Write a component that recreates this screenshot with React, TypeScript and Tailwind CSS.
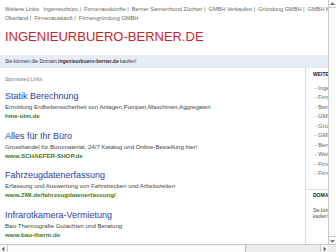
const ads = [
  {
    title: 'Statik Berechnung',
    desc: 'Ermittlung Erdbebensicherheit von Anlagen,Pumpen,Maschinen,Aggregaten',
    url: 'hme-ulm.de',
  },
  {
    title: 'Alles für Ihr Büro',
    desc: 'Grosshandel für Büromaterial, 24/7 Katalog und Online-Bestellung hier!',
    url: 'www.SCHAEFER-SHOP.de',
  },
  {
    title: 'Fahrzeugdatenerfassung',
    desc: 'Erfassung und Auswertung von Fahrstrecken und Arbeitszeiten',
    url: 'www.ZMI.de/fahrzeugdatenerfassung/',
  },
  {
    title: 'Infrarotkamera-Vermietung',
    desc: 'Bau-Thermografie Gutachten und Beratung',
    url: 'www.bau-therm.de',
  },
]

const sideLinks = [
  'Ingenieurbüro',
  'Firmenauskünfte',
  'Berner Sennenhund Züchter',
  'GMBH Verkaufen',
  'Gründung GMBH',
  'GMBH Mantel',
  'Berner Oberland',
  'Weiterbildung',
  'Firmenauskauft',
  'Firmengründung GMBH',
]

function Arrow({ dir }: { dir: 'up' | 'down' | 'left' | 'right' }) {
  const pts = {
    up: '1,5 4,2 7,5',
    down: '1,3 4,6 7,3',
    left: '5,1 2,4 5,7',
    right: '3,1 6,4 3,7',
  }[dir]
  return (
    <svg width="8" height="8" viewBox="0 0 8 8" className="block">
      <polygon points={pts} fill="#6b6b6b" />
    </svg>
  )
}

export default function App() {
  return (
    <div className="w-[336px] h-[252px] flex flex-col overflow-hidden bg-white font-['Liberation_Sans',Arial,sans-serif]">
      <div className="flex h-[244px]">
        {/* page viewport */}
        <div className="w-[328px] overflow-hidden">
          <div className="w-[430px]">
            {/* top links */}
            <div className="px-[5px] pt-[5px] text-[5.6px] leading-[9px] text-[#666] whitespace-nowrap">
              <div>
                Weitere Links:&nbsp; Ingenieurbüro&nbsp;|&nbsp; Firmenauskünfte&nbsp;|&nbsp; Berner Sennenhund Züchter&nbsp;|&nbsp; GMBH Verkaufen&nbsp;|&nbsp; Gründung GMBH&nbsp;|&nbsp; GMBH Mantel&nbsp;|&nbsp; Berner
              </div>
              <div>Oberland&nbsp;|&nbsp; Firmenauskauft&nbsp;|&nbsp; Firmengründung GMBH</div>
            </div>

            <h1 className="mt-[6px] px-[5px] text-[13px] leading-[16px] text-[#c4262b] whitespace-nowrap">
              INGENIEURBUERO-BERNER.DE
            </h1>

            {/* domain band */}
            <div className="mt-[10px] h-[13px] bg-[#e6ecf6] px-[5px] flex items-center text-[5px] text-[#333] whitespace-nowrap">
              Sie können die Domain&nbsp;<b>ingenieurbuero-berner.de</b>&nbsp;kaufen!
            </div>

            <div className="flex">
              {/* ads */}
              <div className="w-[305px] px-[5px] pt-[8px]">
                <div className="text-[5px] leading-[6px] text-[#777]">Sponsored Links</div>
                <div className="mt-[8px] flex flex-col gap-[9.5px]">
                  {ads.map((ad) => (
                    <div key={ad.title} className="whitespace-nowrap">
                      <div className="text-[9px] leading-[12px] text-[#2b3c9e]">{ad.title}</div>
                      <div className="text-[6.1px] leading-[9px] text-[#444]">{ad.desc}</div>
                      <div className="text-[6.2px] leading-[9px] font-bold text-[#3d7a1c]">{ad.url}</div>
                    </div>
                  ))}
                </div>
              </div>

              {/* sidebar */}
              <div className="flex-1 border-l border-[#dcdcdc] h-[176px]">
                <div className="pl-[7px] pt-[2.5px] pb-[10px]">
                  <div className="text-[5px] leading-[7px] font-bold text-[#222]">WEITERE LINKS</div>
                  <ul className="mt-[6px] pl-[2px]">
                    {sideLinks.map((l) => (
                      <li key={l} className="flex items-center gap-[1.5px] text-[6px] leading-[9.5px] text-[#666] whitespace-nowrap">
                        <span className="text-[4px] text-[#888]">•</span>
                        {l}
                      </li>
                    ))}
                  </ul>
                </div>
                <div className="border-t border-[#dcdcdc] pl-[7px] pt-[2.5px]">
                  <div className="text-[5px] leading-[7px] font-bold text-[#222]">DOMAIN KAUFEN</div>
                  <div className="mt-[8.5px] text-[4.5px] leading-[6px] text-[#444]">
                    Sie können die Domain
                    <br />
                    kaufen!
                  </div>
                </div>
              </div>
            </div>
          </div>
        </div>

        {/* vertical scrollbar */}
        <div className="w-[8px] flex flex-col border-l border-[#c9c9c9] bg-[#fafafa]">
          <div className="h-[8px] border-b border-[#c9c9c9] flex items-center justify-center">
            <Arrow dir="up" />
          </div>
          <div className="flex-1" />
          <div className="h-[8px] border-t border-[#c9c9c9] flex items-center justify-center">
            <Arrow dir="down" />
          </div>
        </div>
      </div>

      {/* horizontal scrollbar */}
      <div className="h-[8px] flex border-t border-[#c9c9c9]">
        <div className="w-[8px] flex items-center justify-center bg-[#fafafa] border-r border-[#c9c9c9]">
          <Arrow dir="left" />
        </div>
        <div className="w-[238px] bg-[#fbfbfb] border-r border-[#b9b9b9]" />
        <div className="w-[74px] bg-[#ececec]" />
        <div className="w-[8px] flex items-center justify-center bg-[#fafafa] border-l border-[#c9c9c9]">
          <Arrow dir="right" />
        </div>
        <div className="w-[8px] bg-[#ececec]" />
      </div>
    </div>
  )
}
